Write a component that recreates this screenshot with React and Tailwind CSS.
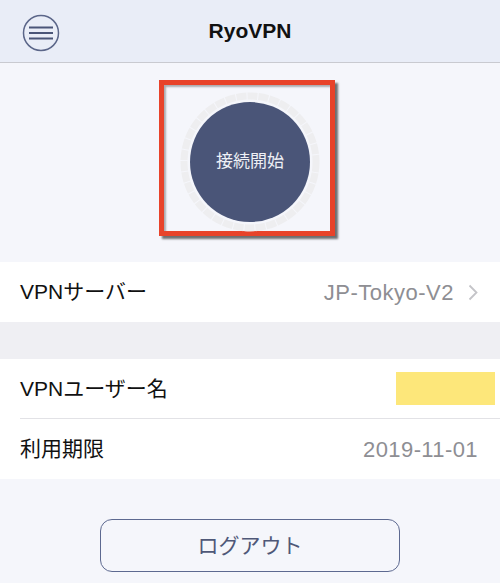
import React from "react";

const font = { fontFamily: '"Liberation Sans", "Noto Sans CJK JP", sans-serif' };

const MenuIcon = () => (
  <svg width="38" height="38" viewBox="0 0 38 38" fill="none">
    <circle cx="19" cy="19" r="17.5" stroke="#5b6689" strokeWidth="1.5" />
    <path d="M7 13.5h24M7 19h24M7 24.5h24" stroke="#4a5578" strokeWidth="2.2" />
  </svg>
);

const Ring = () => (
  <svg width="140" height="140" viewBox="0 0 140 140" className="absolute inset-0">
    <circle
      cx="70"
      cy="70"
      r="66"
      fill="none"
      stroke="#eeeef0"
      strokeWidth="7"
      strokeDasharray="10 1"
    />
  </svg>
);

const Row = ({ label, children, border }) => (
  <div className="flex h-[60px] items-center bg-white pl-5">
    <div
      className={`flex h-full flex-1 items-center justify-between pr-[22px] ${
        border ? "border-b border-[#e2e2e6]" : ""
      }`}
    >
      <span className="text-[21px] text-[#111]">{label}</span>
      {children}
    </div>
  </div>
);

export default function App() {
  return (
    <div className="min-h-[583px] w-[500px] bg-[#f5f6fb]" style={font}>
      <header className="relative flex h-[63px] items-center justify-center border-b border-[#c9cad0] bg-[#e9edf7]">
        <button className="absolute left-[22px] top-[14px]">
          <MenuIcon />
        </button>
        <h1 className="text-[21px] font-bold text-[#111]">RyoVPN</h1>
      </header>

      <section className="flex justify-center pb-[26px] pr-[6px] pt-[17px]">
        <div className="flex h-[156px] w-[176px] items-center justify-center border-[5px] border-[#e8432a] pl-[6px] pt-[8px] shadow-[3px_3px_2px_rgba(0,0,0,0.55),inset_2px_2px_2px_rgba(0,0,0,0.3)]">
          <div className="relative flex h-[140px] w-[140px] items-center justify-center">
            <Ring />
            <button className="relative flex h-[120px] w-[120px] items-center justify-center rounded-full bg-[#4a5578] text-[17px] text-[#eef0f6]">
              接続開始
            </button>
          </div>
        </div>
      </section>

      <Row label="VPNサーバー">
        <span className="flex items-center gap-[14px] text-[22px] tracking-[0.5px] text-[#8e8e93]">
          JP-Tokyo-V2
          <svg width="10" height="17" viewBox="0 0 10 17" fill="none">
            <path d="M1.5 1.5l7 7-7 7" stroke="#c4c4c8" strokeWidth="1.8" />
          </svg>
        </span>
      </Row>

      <div className="h-[37px] bg-[#efeff3]" />

      <Row label="VPNユーザー名" border>
        <span className="-mr-[17px] h-[33px] w-[99px] bg-[#fde77a]" />
      </Row>
      <Row label="利用期限">
        <span className="text-[22px] tracking-[0.4px] text-[#8e8e93]">2019-11-01</span>
      </Row>

      <div className="flex justify-center pt-[40px]">
        <button className="h-[53px] w-[300px] rounded-[12px] border-[1.5px] border-[#5d6990] text-[21px] text-[#4f5878]">
          ログアウト
        </button>
      </div>
    </div>
  );
}
